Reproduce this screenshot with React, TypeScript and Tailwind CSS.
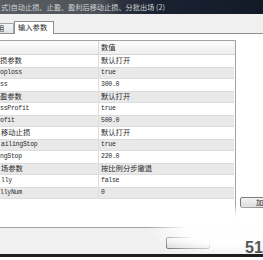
import React from "react";

const cjk = '"Noto Sans CJK SC", "Noto Sans", sans-serif';
const mono = '"Liberation Mono", "DejaVu Sans Mono", monospace';

type Row = { label: string; value: string; pad: string };

const rows: Row[] = [
  { label: "损参数", value: "默认打开", pad: "pl-0" },
  { label: "oploss", value: "true", pad: "pl-0" },
  { label: "ss", value: "300.0", pad: "pl-0" },
  { label: "盈参数", value: "默认打开", pad: "pl-0" },
  { label: "ssProfit", value: "true", pad: "pl-0" },
  { label: "ofit", value: "500.0", pad: "pl-0" },
  { label: "移动止损", value: "默认打开", pad: "pl-[1px]" },
  { label: "ailingStop", value: "true", pad: "pl-[1px]" },
  { label: "ngStop", value: "220.0", pad: "pl-0" },
  { label: "场参数", value: "按比例分步撤退", pad: "pl-[1px]" },
  { label: "lly", value: "false", pad: "pl-[1px]" },
  { label: "llyNum", value: "0", pad: "pl-0" },
];

const isAscii = (s: string) => /^[\x00-\x7f]*$/.test(s);

function Cell({ text }: { text: string }) {
  if (isAscii(text)) {
    return (
      <span
        className="text-[6.5px] tracking-[-0.25px] text-[#2a2a2a]"
        style={{ fontFamily: mono }}
      >
        {text}
      </span>
    );
  }
  return (
    <span className="text-[7.3px] text-[#2a2a2a]" style={{ fontFamily: cjk }}>
      {text}
    </span>
  );
}

export default function App() {
  return (
    <div
      className="relative flex h-[260px] w-[263px] flex-col overflow-hidden bg-white"
      style={{ fontFamily: cjk }}
    >
      {/* Title bar */}
      <div className="h-[14px] shrink-0 bg-[linear-gradient(to_right,#5a5e64_0%,#4d5158_38%,#2c323c_46%,#1a2232_60%,#121a28_100%)]">
        <div className="whitespace-nowrap pl-[1px] text-[7.2px] leading-[14px] text-[#d3d5d8]">
          式)自动止损、止盈、盈利后移动止损、分批出场 (2)
        </div>
      </div>

      {/* Tab strip */}
      <div className="flex h-[20px] shrink-0 items-end border-b border-[#8d9096] bg-[#f0f0f0]">
        <div className="flex h-[10px] w-[14px] items-center overflow-hidden border-r border-t border-[#a3a6ab] bg-[linear-gradient(#f5f5f5,#e4e4e4)]">
          <span className="-ml-[3px] text-[7.3px] leading-none text-[#2a2a2a]">用</span>
        </div>
        <div className="-mb-px flex h-[13px] w-[40px] items-center border-l border-r border-t border-[#8d9096] bg-white pl-[3px]">
          <span className="text-[7.3px] leading-none text-[#2a2a2a]">输入参数</span>
        </div>
      </div>

      {/* Content */}
      <div className="flex shrink-0 bg-white pt-[6px]">
        <div className="flex h-[188px] w-[236px] shrink-0 flex-col border-b border-r border-t border-[#a3a3a3]">
          {/* header */}
          <div className="flex h-[14px] shrink-0 border-b border-[#d6d6d6] bg-[linear-gradient(#fbfbfb,#eeeeee)]">
            <div className="w-[99px] border-r border-[#d9d9d9]" />
            <div className="flex items-center pl-[2px]">
              <span className="text-[7.3px] leading-none text-[#2a2a2a]">数值</span>
            </div>
          </div>
          {rows.map((r, i) => (
            <div
              key={i}
              className={
                i % 2 === 1
                  ? "mr-[1px] flex h-[12px] shrink-0 border-y border-[#dcdcdc] bg-[#e9e9e9]"
                  : "mr-[1px] flex h-[12px] shrink-0 bg-white"
              }
            >
              <div
                className={
                  "flex w-[99px] shrink-0 items-center overflow-hidden whitespace-nowrap border-r border-[#dedede] leading-none " +
                  r.pad
                }
              >
                <Cell text={r.label} />
              </div>
              <div className="flex items-center whitespace-nowrap pl-[2px] leading-none">
                <Cell text={r.value} />
              </div>
            </div>
          ))}
        </div>
        <div className="min-w-0 flex-1 pl-[4px]">
          <div className="mt-[157px] flex h-[11px] w-[40px] shrink-0 items-center rounded-[2px] border border-[#7a7a7a] bg-[linear-gradient(#f4f4f4,#dcdcdc)] pl-[15px]">
            <span className="text-[7.3px] leading-none text-[#2a2a2a]">加</span>
          </div>
        </div>
      </div>

      {/* Bottom area */}
      <div className="h-[26px] shrink-0 bg-[#f0f0f0] pl-[166px] pt-[9px]">
        <div className="h-[12px] w-[44px] rounded-[2px] border border-[#7a7a7a] bg-[linear-gradient(#f4f4f4,#dcdcdc)]" />
      </div>
      <div className="h-[3px] shrink-0 bg-[#1e1e1e]" />
      <div className="flex-1 bg-white" />

      {/* watermark fade */}
      <div className="pointer-events-none absolute left-[130px] top-[206px] h-[48px] w-[133px] bg-[radial-gradient(ellipse_78px_28px_at_72%_50%,rgba(255,255,255,0.98)_50%,rgba(255,255,255,0)_100%)]" />
      <div
        className="pointer-events-none absolute left-[245px] top-[240px] text-[16px] font-bold leading-none text-[#555]"
        style={{ fontFamily: '"Liberation Sans", Arial, sans-serif' }}
      >
        51
      </div>
    </div>
  );
}
